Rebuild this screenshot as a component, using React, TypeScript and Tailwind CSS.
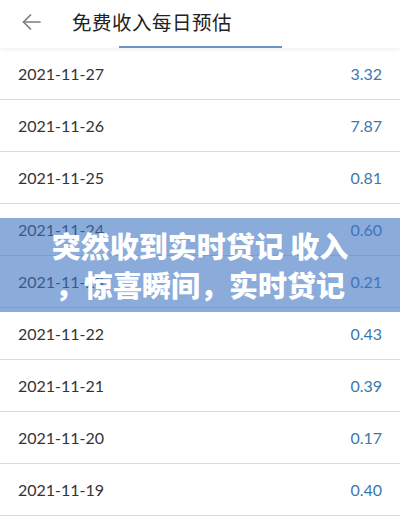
const rows: [string, string][] = [
  ["2021-11-27", "3.32"],
  ["2021-11-26", "7.87"],
  ["2021-11-25", "0.81"],
  ["2021-11-24", "0.60"],
  ["2021-11-23", "0.21"],
  ["2021-11-22", "0.43"],
  ["2021-11-21", "0.39"],
  ["2021-11-20", "0.17"],
  ["2021-11-19", "0.40"],
];

export default function App() {
  return (
    <div
      className="relative w-[400px] h-[532px] overflow-hidden bg-white"
      style={{ fontFamily: 'Lato, "Noto Sans CJK SC", sans-serif' }}
    >
      {/* top bar */}
      <header className="relative z-10 h-12 flex items-center bg-white shadow-[0_2px_4px_rgba(0,0,0,0.06)]">
        <div className="w-[72px] pl-[22px] pb-1 flex items-center">
          <svg width="19" height="16" viewBox="0 0 19 16" fill="none" stroke="#7d7d7d" strokeWidth="1.7" strokeLinecap="round" strokeLinejoin="round">
            <path d="M18 8H1.5" />
            <path d="M8.5 1 1.5 8l7 7" />
          </svg>
        </div>
        <h1 className="pb-1 text-[19.5px] text-[#222] tracking-[0.5px]" style={{ fontFamily: '"Noto Sans CJK SC", sans-serif' }}>
          免费收入每日预估
        </h1>
        <div className="absolute bottom-0 left-[119px] w-[163px] h-[2px] bg-[#6b93c4]"></div>
      </header>

      {/* daily list */}
      <ul>
        {rows.map(([date, value]) => (
          <li key={date} className="h-[52px] flex items-center justify-between px-[18px] border-b border-[#dcdcdc]">
            <span className="text-[16px] text-[#333]">{date}</span>
            <span className="text-[16px] text-[#3b78ad]">{value}</span>
          </li>
        ))}
      </ul>

      {/* caption band */}
      <div className="absolute left-0 right-0 top-[218px] h-[94px] z-20 flex flex-col items-center justify-center bg-[rgba(62,115,195,0.6)]">
        <p
          className="text-white font-black text-[29px] leading-[39px] text-center"
          style={{ fontFamily: '"Noto Sans CJK SC", sans-serif' }}
        >
          突然收到实时贷记 收入
          <br />
          ，惊喜瞬间，实时贷记
        </p>
      </div>
    </div>
  );
}
